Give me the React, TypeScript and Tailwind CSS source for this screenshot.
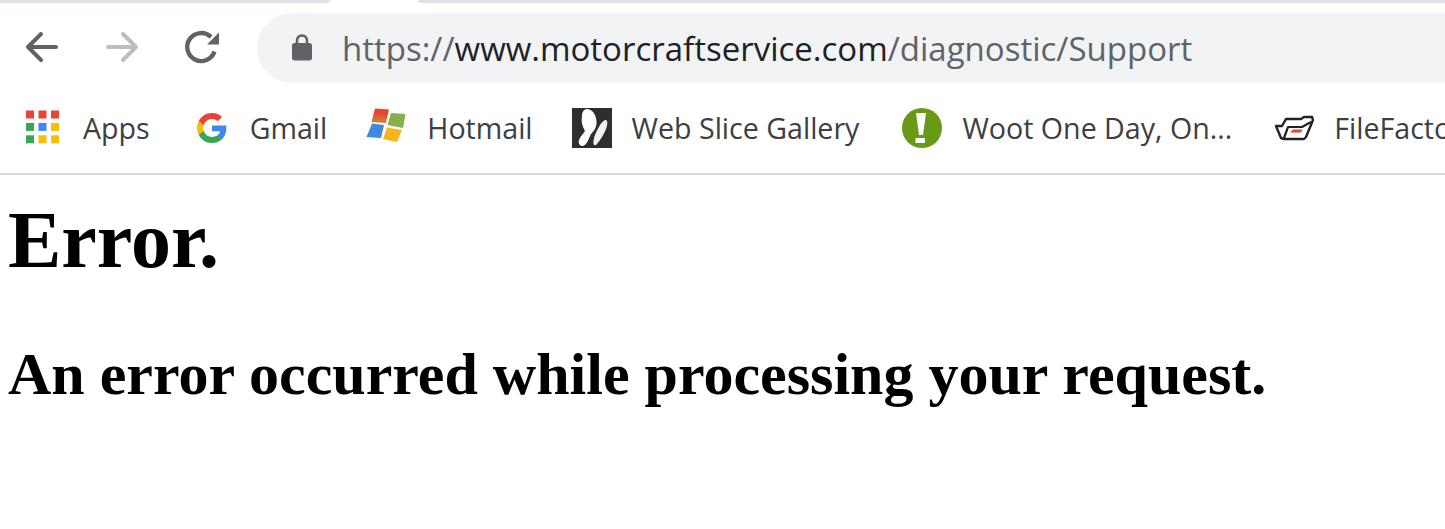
const uiFont = "font-['Open_Sans','Noto_Sans',sans-serif]";

function AppsIcon() {
  const cells = [
    ["#ea4335", "#ea4335", "#ea4335"],
    ["#34a853", "#4285f4", "#fbbc05"],
    ["#34a853", "#fbbc05", "#fbbc05"],
  ];
  return (
    <svg width="40" height="40" viewBox="0 0 40 40">
      {cells.map((row, r) =>
        row.map((c, i) => <rect key={`${r}-${i}`} x={4 + i * 12.5} y={2.500 + r * 12.4} width="8" height="8" fill={c} />)
      )}
    </svg>
  );
}

function GoogleIcon() {
  return (
    <svg width="40" height="40" viewBox="-12.800 -8 64 64">
      <path fill="#EA4335" d="M24 9.5c3.54 0 6.71 1.22 9.21 3.6l6.85-6.85C35.9 2.38 30.47 0 24 0 14.62 0 6.51 5.38 2.56 13.22l7.98 6.19C12.43 13.72 17.74 9.5 24 9.5z" />
      <path fill="#4285F4" d="M46.98 24.55c0-1.57-.15-3.09-.38-4.55H24v9.02h12.94c-.58 2.96-2.26 5.48-4.78 7.18l7.73 6c4.51-4.18 7.09-10.36 7.09-17.65z" />
      <path fill="#FBBC05" d="M10.53 28.59c-.48-1.45-.76-2.99-.76-4.59s.27-3.14.76-4.59l-7.98-6.19C.92 16.46 0 20.12 0 24c0 3.88.92 7.54 2.56 10.78l7.97-6.19z" />
      <path fill="#34A853" d="M24 48c6.48 0 11.93-2.13 15.89-5.81l-7.73-6c-2.15 1.45-4.92 2.3-8.16 2.3-6.26 0-11.57-4.22-13.47-9.91l-7.98 6.19C6.51 42.62 14.62 48 24 48z" />
    </svg>
  );
}

function WindowsIcon() {
  return (
    <svg width="40" height="40" viewBox="0 0 40 40" className="blur-[0.6px]">
      <defs>
        <linearGradient id="winRed" x1="0" y1="0" x2="0" y2="1">
          <stop offset="0.3" stopColor="#e8412c" />
          <stop offset="0.8" stopColor="#cf7a3a" />
        </linearGradient>
      </defs>
      <path fill="url(#winRed)" d="M9 0.500 23 1.500 20 15 5.500 14z" />
      <path fill="#86b04a" d="M25 5 39.500 6 37 20 21.500 17z" />
      <path fill="#4288dc" d="M6 15.500 18 17 15 30 0.500 29z" />
      <path fill="#fbb31c" d="M21 19.500 36 22 31 34 17 31z" />
    </svg>
  );
}

function SliceIcon() {
  return (
    <svg width="40" height="40" viewBox="0 0 40 40">
      <rect width="40" height="40" fill="#2e2e30" />
      <path fill="#fff" d="M15 1C20 1 24 6 24.500 13 25 19 22 23 19 26 17 30 15 37 11 38 8 38 6 36 7 32 8 29 11 26 13 23 10 18 9 13 10 8 10 4 12 1 15 1z" />
      <path fill="#f2f2f2" d="M34 12C36 13 35.500 17 34 21 32 26 28 33 24 37 22 38 21 36 21.500 33 22 28 25 22 28 17 30 14 32 12 34 12z" />
    </svg>
  );
}

function WootIcon() {
  return (
    <svg width="40" height="40" viewBox="0 0 40 40">
      <circle cx="20" cy="20" r="20" fill="#689a17" />
      <path fill="#fff" d="M14 5h10l-3 22h-4z" />
      <rect x="13.500" y="30" width="9.500" height="5" fill="#fff" />
    </svg>
  );
}

function FileFactoryIcon() {
  return (
    <svg width="40" height="40" viewBox="0 0 40 40">
      <path fill="none" stroke="#222" strokeWidth="2.400" strokeLinejoin="round" d="M2 18h6l4-7h15l3-2h8l1 3-7 17-2 2H10l-3-1z" />
      <path fill="none" stroke="#222" strokeWidth="2.200" strokeLinejoin="round" d="M10 30l4-11h14l9-5" />
      <path fill="#e8442a" d="M19 21.500h9.500l-1.500 3h-11z" />
    </svg>
  );
}

const bookmarks = [
  { label: "Apps", icon: <AppsIcon />, cls: "gap-[21px]" },
  { label: "Gmail", icon: <GoogleIcon />, cls: "ml-[39px] gap-[21px]" },
  { label: "Hotmail", icon: <WindowsIcon />, cls: "ml-[39px] gap-[21px]" },
  { label: "Web Slice Gallery", icon: <SliceIcon />, cls: "ml-[39px] gap-[20px]" },
  { label: "Woot One Day, On...", icon: <WootIcon />, cls: "ml-[43px] gap-[20px]" },
  { label: "FileFactory", icon: <FileFactoryIcon />, cls: "ml-[42px] gap-[20px]" },
];

export default function App() {
  return (
    <div className="min-h-[529px] bg-white overflow-hidden">
      {/* tab strip */}
      <div className="flex h-[3px] bg-white">
        <div className="w-[330px] bg-[#dee1e6] rounded-br-[3px]" />
        <div className="w-[88px]" />
        <div className="flex-1 bg-[#dee1e6] rounded-bl-[3px]" />
      </div>

      {/* toolbar */}
      <div className="flex items-center h-[90px] pl-[18px]">
        <svg width="48" height="48" viewBox="0 0 48 48" fill="none" stroke="#5f6368" strokeWidth="4" strokeLinecap="round" strokeLinejoin="round" className="shrink-0">
          <path d="M38 23H10M23 10 10 23l13 13" />
        </svg>
        <svg width="48" height="48" viewBox="0 0 48 48" fill="none" stroke="#bdbdbd" strokeWidth="4" strokeLinecap="round" strokeLinejoin="round" className="shrink-0 ml-[32px]">
          <path d="M10 23h28M25 10l13 13-13 13" />
        </svg>
        <svg width="48" height="48" viewBox="0 0 48 48" fill="none" className="shrink-0 ml-[30px]">
          <path d="M35 13A14 14 0 1 0 38.500 27.500" stroke="#5f6368" strokeWidth="4.400" />
          <path d="M43 8.500V20.500H31z" fill="#5f6368" />
        </svg>
        <div className="flex-1 ml-[33px] h-[70px] rounded-l-full bg-[#f1f3f4] flex items-center pl-[30px] min-w-0">
          <svg width="30" height="30" viewBox="0 0 24 24" fill="#5f6368" className="shrink-0">
            <path d="M18 8h-1V6c0-2.760-2.240-5-5-5S7 3.240 7 6v2H6c-1.100 0-2 .9-2 2v10c0 1.100.9 2 2 2h12c1.100 0 2-.9 2-2V10c0-1.100-.9-2-2-2zM9 6c0-1.660 1.340-3 3-3s3 1.340 3 3v2H9V6z" />
          </svg>
          <div className={`ml-[25px] pt-[1px] text-[33px] whitespace-nowrap text-[#5f6368] ${uiFont}`}>
            https://<span className="text-[#202124]">www.motorcraftservice.com</span>/diagnostic/Support
          </div>
        </div>
      </div>

      {/* bookmarks bar */}
      <div className="flex items-center h-[70px] pb-[10px] pl-[22px] border-b-2 border-[#dadce0] box-content overflow-hidden whitespace-nowrap">
        {bookmarks.map((b) => (
          <div key={b.label} className={`flex items-center shrink-0 ${b.cls}`}>
            {b.icon}
            <span className={`text-[28.6px] leading-[40px] text-[#3c4043] ${uiFont}`}>{b.label}</span>
          </div>
        ))}
      </div>

      {/* page body */}
      <div className="pl-[8px] text-black font-['Liberation_Serif',serif] font-bold">
        <h1 className="text-[80px] leading-[92px] mt-[19px]">Error.</h1>
        <h2 className="text-[60px] leading-[69px] mt-[54px]">An error occurred while processing your request.</h2>
      </div>
    </div>
  );
}
